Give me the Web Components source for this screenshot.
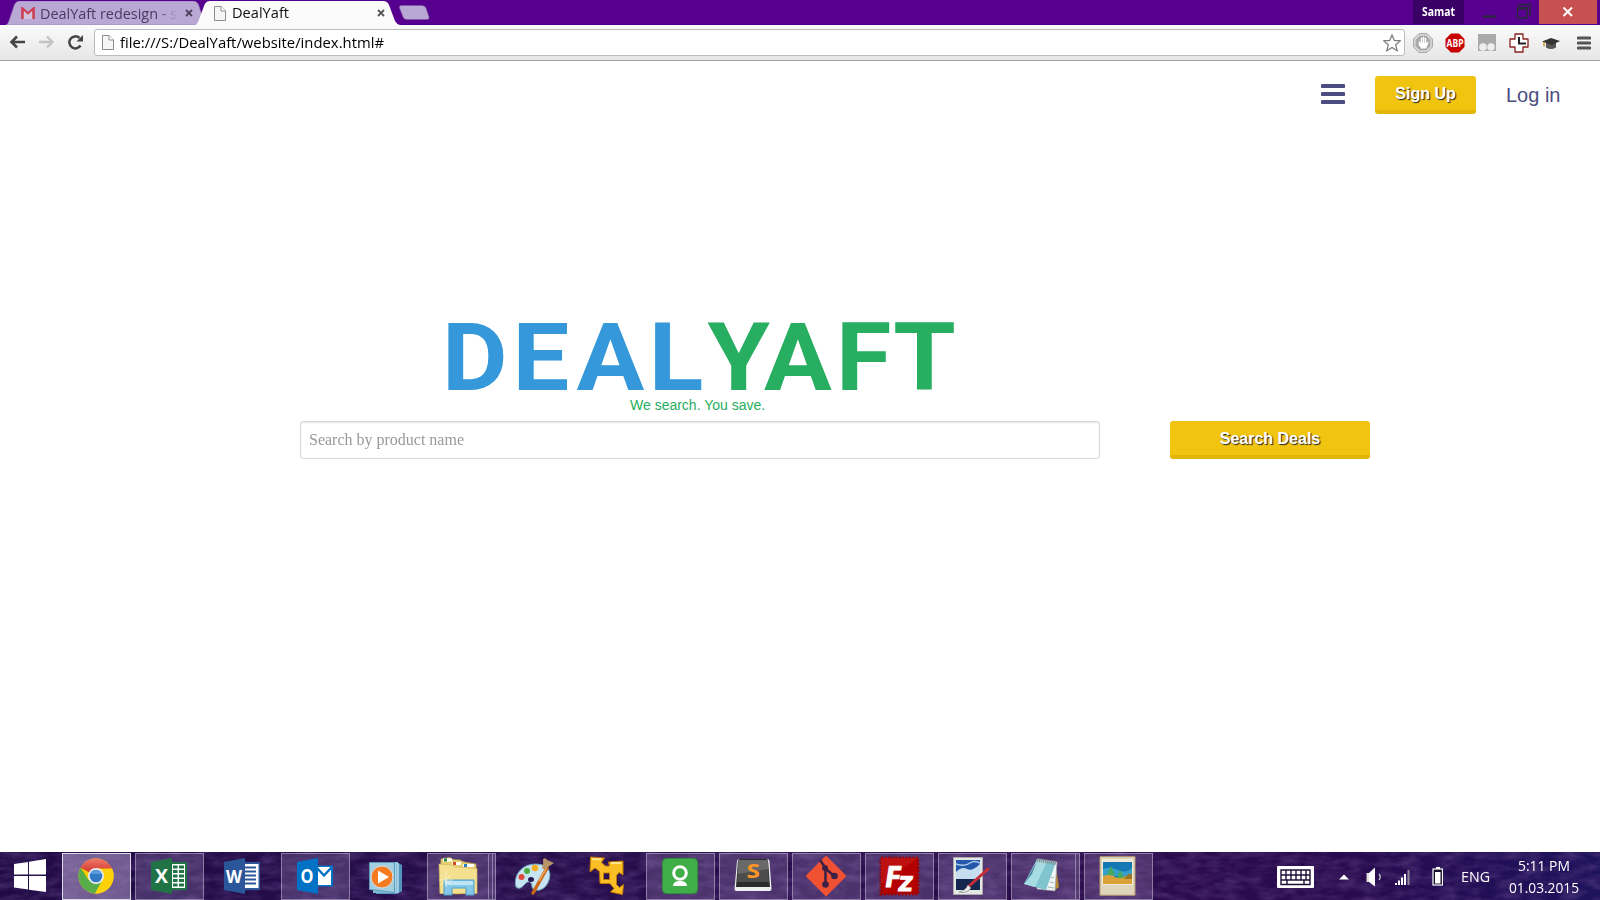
<!DOCTYPE html>
<html lang="en">
<head>
<meta charset="utf-8">
<title>DealYaft</title>
<style>
html,body{margin:0;height:100%;overflow:hidden;background:#fff}
body{font-family:"Liberation Sans",Arial,sans-serif}
</style>
</head>
<body>
<desktop-shell></desktop-shell>
<script>
const make = (name, css, html, after) => customElements.define(name, class extends HTMLElement {
  connectedCallback() {
    if (this.shadowRoot) return;
    this.attachShadow({mode:'open'}).innerHTML = `<style>${css}</style>${html}`;
    if (after) after(this, this.shadowRoot);
  }
});
const UI = 'font-family:"Open Sans","Noto Sans",sans-serif;';

/* Text squeezed or stretched to an exact width given by its w attribute */
make('fit-text', `:host{display:inline-block;white-space:pre;flex:none}span{display:inline-block;transform-origin:0 50%}`,
  `<span><slot></slot></span>`, (el, root) => {
    const w = +el.getAttribute('w'), s = root.querySelector('span');
    const n = s.getBoundingClientRect().width;
    el.style.width = w + 'px';
    if (n) s.style.transform = `scaleX(${w / n})`;
  });

const pageIcon = `<svg width="12" height="15" viewBox="0 0 12 15"><path d="M.5.5H7l4.500 4.500v9.500H.5z" fill="#f6f6f6" stroke="#8d8d8d"/><path d="M7 .5V5h4.500" fill="#fff" stroke="#8d8d8d"/></svg>`;
const closeX = c => `<svg width="8" height="8" viewBox="0 0 8 8"><path d="M1 1l6 6M7 1L1 7" stroke="${c}" stroke-width="1.8"/></svg>`;

make('tab-strip', `:host{display:flex;height:25px;background:#570090;${UI}font-size:15px;line-height:23px;color:#111;overflow:hidden}
.tab{position:relative;height:24px;margin-top:1px;display:flex;align-items:center;box-sizing:border-box}
.tab>.bg{position:absolute;left:0;top:0}.tab>*:not(.bg){position:relative}
.tab fit-text{margin-top:-1px}
.t1{width:199px;margin-left:6px;padding-left:15px;color:#4a3a63}.t2{width:207px;margin-left:-10px;padding-left:19px}
.clip{width:138px;margin-left:5px;overflow:hidden;height:23px;-webkit-mask:linear-gradient(90deg,#000 85%,transparent)}
.clip fit-text{margin-top:-1px}
.new{margin:5px 0 0 -4px;width:32px;height:16px}
.who{margin-left:auto;width:51px;height:24px;margin-right:1px;background:#3b0066;color:#fff;font-size:11.500px;font-weight:700;text-align:center}
.win{width:74px;display:flex;height:24px}.win svg{display:block}
.close{width:58px;height:24px;background:#c75050;margin-right:3px;display:flex;align-items:center;justify-content:center}
`, `<div class="tab t1"><svg class="bg" width="199" height="24"><path d="M0 24Q2 23 3 20L8 5Q9.500 0 14 0H187Q191.500 0 193 5L199 24z" fill="#b9a8d3" stroke="#8d73ae" stroke-width=".6"/></svg>
<svg width="14" height="12" viewBox="0 0 14 12"><path d="M1.400 12V1.500L7 6.700l5.600-5.200V12" fill="none" stroke="#cf3f50" stroke-width="2.500"/><path d="M3 4l4 3.800L11 4v8H3z" fill="#d3c4dd"/></svg>
<div class="clip"><fit-text w="137">DealYaft redesign - s</fit-text></div><span style="margin-left:7px;display:flex">${closeX('#51405e')}</span></div>
<div class="tab t2"><svg class="bg" width="207" height="24"><path d="M0 24Q2.500 23 3.500 20L9 5Q10.500 0 15 0H188Q192.500 0 194 4L200 20Q201.500 23 205 24z" fill="#fbfbfb"/></svg>
<span style="display:flex">${pageIcon}</span><fit-text w="57" style="margin-left:6px">DealYaft</fit-text><span style="margin-left:88px;display:flex">${closeX('#555')}</span></div>
<svg class="new" viewBox="0 0 32 16"><path d="M3 .5H24Q27 .5 28 3L31 12Q31.500 14.500 29 14.500H9Q6 14.500 5 12L1.500 3Q1 .5 3 .5z" fill="#b9a8d3" stroke="#7d58a6" stroke-width=".6"/></svg>
<div class="who"><fit-text w="33">Samat</fit-text></div>
<div class="win"><svg width="74" height="24"><path d="M18 16.500H31.500" stroke="#2a2a35" stroke-width="2"/><path d="M54 5.500V4.500H65V15H64" fill="none" stroke="#2a2a35" stroke-width="1.400"/><path d="M52.500 8.500H62V18H52.500z" fill="none" stroke="#2a2a35" stroke-width="1.300"/><path d="M52 8H62.500" stroke="#2a2a35" stroke-width="2.500"/></svg></div>
<div class="close"><svg width="12" height="10" viewBox="0 0 12 10"><path d="M1.500 .5l8.500 8.500M10 .5L1.500 9" stroke="#fff" stroke-width="2"/></svg></div>`);

make('tool-bar', `:host{display:flex;align-items:center;height:36px;box-sizing:border-box;background:linear-gradient(#fbfbfb,#e6e6e6);border-bottom:1px solid #a3a3a3;padding-left:9px;${UI}font-size:15px;color:#000}
svg{display:block;flex:none}.nav{display:flex;gap:12px;width:85px}
.box{width:1311px;height:27px;box-sizing:border-box;border:1px solid #bbb;border-radius:3px;background:#fff;display:flex;align-items:center;padding:0 3px 0 7px;line-height:25px}
.box .star{margin-left:auto}.ext{display:flex;gap:12px;margin-left:8px;align-items:center}`,
`<div class="nav"><svg width="17" height="14" viewBox="0 0 17 14"><path d="M16 7H3M8 1.500L2.500 7L8 12.500" fill="none" stroke="#444" stroke-width="2.600"/></svg>
<svg width="17" height="14" viewBox="0 0 17 14"><path d="M1 7h13M9 1.500L14.500 7L9 12.500" fill="none" stroke="#c3c3c3" stroke-width="2.400"/></svg>
<svg width="17" height="16" viewBox="0 0 17 16" style="margin-top:-1px"><path d="M13.500 11.500A6 6 0 1 1 12.500 4" fill="none" stroke="#444" stroke-width="2.500"/><path d="M16 1v6.500H9.500z" fill="#444"/></svg></div>
<div class="box">${pageIcon}<fit-text w="264" style="margin-left:6px">file:///S:/DealYaft/website/index.html#</fit-text>
<svg class="star" width="18" height="18" viewBox="0 0 18 18"><path d="M9 1l2.300 5.400 6 .5-4.600 3.900 1.500 5.900L9 13.500l-5.200 3.200 1.500-5.900L.7 6.900l6-.5z" fill="#fff" stroke="#777" stroke-width="1.200"/></svg></div>
<div class="ext">
<svg width="20" height="20" viewBox="0 0 20 20"><path d="M6 .7h8L19.300 6v8L14 19.300H6L.7 14V6z" fill="#e4e4e4" stroke="#999"/><path d="M6.700 2.500h6.600L17.500 6.700v6.600L13.300 17.500H6.700L2.500 13.300V6.700z" fill="#aaa"/><path d="M6.500 9v3.500M8.500 5.500V11M10.500 4.500V11M12.500 5.500V11" stroke="#fff" stroke-width="1.500" stroke-linecap="round"/><path d="M6 10h7.300l1.700-1.500q1 .3.300 1.500L13 15.500H8z" fill="#fff"/></svg>
<svg width="20" height="20" viewBox="0 0 20 20"><path d="M6 .5h8L19.500 6v8L14 19.500H6L.5 14V6z" fill="#c90000"/><text x="1.500" y="13.700" font-family="Open Sans" font-weight="700" font-size="10" fill="#fff" textLength="17" lengthAdjust="spacingAndGlyphs">ABP</text></svg>
<svg width="20" height="20" viewBox="0 0 20 20"><path d="M1 1h18v17H1z" fill="#aaa"/><circle cx="6" cy="14" r="3.800" fill="#eee"/><circle cx="14" cy="14" r="3.800" fill="#eee"/></svg>
<svg width="20" height="20" viewBox="0 0 20 20"><path d="M6 1h8v5h5v8h-5v5H6v-5H1V6h5z" fill="#fff" stroke="#8c2020" stroke-width="1.300" stroke-linejoin="round"/><path d="M10 4v6.500h7" fill="none" stroke="#222" stroke-width="2"/></svg>
<svg width="20" height="20" viewBox="0 0 20 20"><path d="M5 9v5.500q5 3 10 0V9z" fill="#555"/><path d="M1 8.500l9-3.500 9 3-8 4z" fill="#333"/><path d="M3 9v4.500" stroke="#c79a3e" stroke-width="1.500"/></svg>
<svg width="14" height="14" viewBox="0 0 14 14" style="margin-left:4px"><path d="M1.300 2h11.400M1.300 7h11.400M1.300 12h11.400" stroke="#555" stroke-width="3" stroke-linecap="round"/></svg>
</div>`);

make('yellow-button', `:host{display:block;box-sizing:border-box;height:38px;border-bottom:4px solid #e2b607;border-radius:3px;background:#f1c40f;font-weight:700;font-size:16px;line-height:36px;color:#fff;text-align:center;text-shadow:1px 1px 1px #222}`, `<slot></slot>`);

make('site-nav', `:host{display:flex;justify-content:flex-end;align-items:flex-start;height:70px;box-sizing:border-box;padding:15px 40px 0 0;color:#4b4d80}
svg{margin:8px 30px 0 0}yellow-button{width:101px;margin-right:30px}a{font-size:20px;line-height:39px;width:54px;white-space:nowrap}`,
`<svg width="24" height="20"><path d="M1.500 2h21M1.500 10h21M1.500 18h21" stroke="#4b4d80" stroke-width="4" stroke-linecap="round"/></svg><yellow-button>Sign Up</yellow-button><a>Log in</a>`);

make('brand-mark', `:host{display:flex;flex-direction:column;color:#27ae60}
svg{display:block;margin-left:440px;overflow:visible}.tag{font-size:14px;line-height:20px;margin-left:630px;height:20px}`,
`<svg width="530" height="81"><text transform="scale(1.06 1)" x="1.900 68.500 128.900 197 252.400 305.600 373.600 427.500" y="76" font-family="Roboto" font-weight="700" font-size="95.200" fill="#3498db">DEAL<tspan fill="#27ae60">YAFT</tspan></text></svg><div class="tag">We search. You save.</div>`);

make('deal-search', `:host{display:flex;padding-left:300px}
.in{width:800px;height:38px;box-sizing:border-box;border:1px solid #d9d9d6;border-radius:3px;box-shadow:inset 0 1px 2px #e4e4e4;padding-left:8px;font:16px/36px "Liberation Serif",serif;color:#999}
yellow-button{width:200px;margin-left:70px}`,
`<div class="in"><fit-text w="155">Search by product name</fit-text></div><yellow-button>Search Deals</yellow-button>`);

make('site-page', `:host{display:block;height:791px;background:#fff}brand-mark{margin-top:183px}deal-search{margin-top:6px}`,
`<site-nav></site-nav><brand-mark></brand-mark><deal-search></deal-search>`);

make('task-button', `:host{display:flex;position:relative;box-sizing:border-box;width:69px;height:47px;align-items:flex-start;padding-top:2px;justify-content:center;border:1px solid transparent;flex:none}
:host([open]){background:rgba(170,150,200,.27);border-color:rgba(205,195,220,.5)}
:host([active]){background:linear-gradient(120deg,rgba(190,170,215,.55),rgba(150,130,180,.65));border-color:#ddd8e6}
:host([stack="2"]){width:62px;margin-right:7px}:host([stack="1"]){width:65px;margin-right:4px}
slot{display:block;margin-left:-1px}
i{display:none;position:absolute;top:-1px;bottom:-1px;box-sizing:border-box;border:1px solid rgba(205,195,220,.5);border-left:0;background:rgba(170,150,200,.3)}
:host([stack]) .a{display:block;right:-5px;width:4px}:host([stack="2"]) .b{display:block;right:-8px;width:3px}`,
`<slot></slot><i class="a"></i><i class="b"></i>`);

const G = {
chrome:`<defs><linearGradient id="r" x2="0" y2="1"><stop stop-color="#f07a6c"/><stop offset="1" stop-color="#c9261b"/></linearGradient></defs><circle cx="20" cy="20" r="17.500" fill="#fc0"/><path d="M20 20L4.500 11.800A17.500 17.500 0 0 1 36 13H20z" fill="url(#r)"/><path d="M4.700 11.500A17.500 17.500 0 0 0 19 37.500L27 24 20 20 12.500 24z" fill="#58ad4b"/><path d="M20 12.500H36A17.500 17.500 0 0 1 19 37.500L27 23z" fill="#fdd20a"/><circle cx="20" cy="20" r="8" fill="#e9eef2"/><circle cx="20" cy="20" r="6.300" fill="#3279c4"/><path d="M14.500 18a5.800 5.800 0 0 1 11 0z" fill="#5c9cdc"/>`,
excel:`<path d="M22 6h16v28H22z" fill="#1f7345"/><path d="M23 8h13v24H23z" fill="#fff"/><path d="M24 9.500h4.500v3H24zm6 0h5v3h-5zM24 14h4.500v3H24zm6 0h5v3h-5zM24 18.500h4.500v3H24zm6 0h5v3h-5zM24 23h4.500v3H24zm6 0h5v3h-5zM24 27.500h4.500v3H24zm6 0h5v3h-5z" fill="#1f7345"/><path d="M2 6l21-4v36L2 34z" fill="#1f7345"/><text x="6" y="27" font-family="Open Sans" font-weight="700" font-size="20" fill="#fff" textLength="13" lengthAdjust="spacingAndGlyphs">X</text>`,
word:`<path d="M22 6h16v28H22z" fill="#2b579a"/><path d="M23 8h13.500v24H23z" fill="#fff"/><path d="M22 11.500h12M22 15.500h12M22 19.500h12M22 23.500h12M22 27.500h12" stroke="#2b579a" stroke-width="1.800"/><path d="M2 6l21-4v36L2 34z" fill="#2b579a"/><text x="4" y="26.500" font-family="Open Sans" font-weight="700" font-size="18" fill="#fff" textLength="16" lengthAdjust="spacingAndGlyphs">W</text>`,
outlook:`<path d="M22 9.500h16v21H22z" fill="#0072c6"/><path d="M22 11h14v18H22z" fill="#fff"/><path d="M21 11l8 8.500L37 11" fill="none" stroke="#0072c6" stroke-width="2.500"/><path d="M2 6l21-4v36L2 34z" fill="#0072c6"/><text x="5.500" y="27" font-family="Open Sans" font-weight="700" font-size="19" fill="#fff" textLength="13" lengthAdjust="spacingAndGlyphs">O</text>`,
wmp:`<path d="M8 7h22l4 2v26l-5 3H8z" fill="#5296bd"/><path d="M5 6h25v31H5z" fill="#82bcd6"/><path d="M30 7v30M27 7v30" stroke="#d4eef8"/><path d="M1.500 6.500h25v30l-25-3z" fill="#a3cee0" stroke="#5c9ab9"/><circle cx="14" cy="21" r="11" fill="#f47b20" stroke="#d5dfe5"/><path d="M10 14.500v13L21 21z" fill="#fff"/>`,
folder:`<path d="M3 3l9-1.500 3 2 7 .5 4 2 12 2 .5 28-18 2L2 37z" fill="#e8cf74" stroke="#b99d4d" stroke-width=".7"/><path d="M5 4h9M14 7.500h9M25 9.500h11" stroke="#fff" stroke-width="3"/><path d="M6 4h3" stroke="#278447" stroke-width="3"/><path d="M15 7.500h3" stroke="#d44426" stroke-width="3"/><path d="M26 9.500h3" stroke="#257fc5" stroke-width="3"/><path d="M1 8l13 1 3 2 10 .5 12 1V37.500H2z" fill="#f4e08f" stroke="#d4b65f" stroke-width=".7"/><path d="M6 24h30v15h-8v-7H14v7H6z" fill="#85c7e6" stroke="#4a9fc9"/><path d="M7 25h28v4H7z" fill="#bbe4f4"/><path d="M8 15v16M1 24h14M3 19l10 10M13 19L3 29" stroke="#fffbe0" stroke-width=".8" opacity=".8"/>`,
paint:`<path d="M2 31C-1 20 7 8 22 8c12 0 16 8 13 16-3 11-15 13-17 7 0-5-3-7-7-3-3 3-5 6-9 3z" fill="#c7e4f2" stroke="#6a9fba"/><ellipse cx="17" cy="23.500" rx="3" ry="2.500" fill="#251650"/><circle cx="7.500" cy="21" r="3" fill="#dd4a3b"/><circle cx="13" cy="15" r="3" fill="#4aad3c"/><circle cx="21" cy="12" r="3.300" fill="#f7ae22"/><path d="M33 12L19 37" stroke="#cb6818" stroke-width="3.500" stroke-linecap="round"/><path d="M32.500 12L25 25" stroke="#f3a85a" stroke-width="1.500"/><path d="M29 3q3-2 4 1l7 3-6 4-3 3-3-2q2-5 1-9z" fill="#b99467"/>`,
arrows:`<path d="M3.500 1l14 1-3 4.500 4 3.500h4l-1-4 14.500-1v14l-4-2.500-2.500 3v9l3 3 4-3-1 10-12-2.500 3.500-3.500-4-5h-10l-.5-12-4.500-3.500-5 4z" fill="#fbbf25" stroke="#bd760b" stroke-linejoin="round"/><path d="M16.500 17h6v6.500h-6z" fill="#291350" stroke="#bd760b"/><path d="M5 3l9 .5M24 7h10" stroke="#ffe68d" stroke-width="2"/>`,
green:`<rect x="2.500" y="2.500" width="35" height="35" rx="4" fill="#3fae49" stroke="#308d38"/><circle cx="20" cy="17" r="6.300" fill="none" stroke="#fff" stroke-width="3"/><path d="M13 30q0-5 7-5t7 5z" fill="#fff"/>`,
sublime:`<path d="M4 5q.5-2 2-2h28q2 0 2.500 2L38.500 33q0 2-2 2h-33q-2 0-2-2z" fill="#eee"/><path d="M5 4q1-1 2-1h26q1.500 0 2 1l2 27H3z" fill="#2b2b2b"/><path d="M5.500 4h29l1.500 22H4z" fill="#4c4c4c"/><path d="M5.500 4h29.200l.6 9L4.600 18z" fill="#696969"/><text x="13.500" y="21.500" font-family="Open Sans" font-weight="700" font-size="19" fill="#ff9526" textLength="13.500" lengthAdjust="spacingAndGlyphs">S</text>`,
git:`<path d="M20 1.500L38.500 20 20 38.500 1.500 20z" fill="#f05133" stroke="#f05133" stroke-width="3" stroke-linejoin="round"/><path d="M14 4l5.500 8v17M19 12l9 8" fill="none" stroke="#3b2145" stroke-width="2.500"/><circle cx="19" cy="12" r="3" fill="#3b2145"/><circle cx="19.500" cy="28.500" r="3.300" fill="#3b2145"/><circle cx="28.500" cy="20" r="3.300" fill="#3b2145"/>`,
fz:`<rect x="2" y="2" width="37" height="36" fill="#b40000" stroke="#a00000" stroke-width="3" stroke-dasharray="2 1.500"/><path d="M2 2h37L2 28z" fill="#c51a1a" opacity=".6"/><text transform="skewX(-9)" x="9.500" y="31" font-family="Open Sans" font-weight="700" font-size="29" fill="#fff" stroke="#fff">F</text><text transform="skewX(-9)" x="24" y="35" font-family="Open Sans" font-weight="700" font-size="27" fill="#fff" stroke="#fff" textLength="14" lengthAdjust="spacingAndGlyphs">z</text>`,
pic:`<path d="M1.500 1.500h29v37h-29z" fill="#e6e6e4" stroke="#aaa"/><path d="M4 4h24v30H4z" fill="#2458a8"/><path d="M4 16q6-6 11-3t13-5v15H4z" fill="#c7def0"/><path d="M4 8q9 3 14-1 4-3 10 0" stroke="#a9c9ea" fill="none" stroke-width="1.500"/><path d="M4 23h24v11H4z" fill="#14284f"/><path d="M36 13L16 31" stroke="#c72d35" stroke-width="3" stroke-linecap="round"/><path d="M16 29l3 3q-4 6-12 4 6-1 9-7z" fill="#e8e8e8" stroke="#777" stroke-width=".6"/>`,
notepad:`<path d="M32 5l4 26-5 4z" fill="#b58b34"/><path d="M14 3l20 3-2 29L14 33z" fill="#f1f5f5" stroke="#99a" stroke-width=".7"/><path d="M14 3L33 6 23 34 1 28z" fill="#7fc4cf"/><path d="M14 4L24 5.500 12 31 1 28z" fill="#a7dce2"/><path d="M14 5L9 18 1 28z" fill="#4e899f"/><path d="M25 31l6 1M27 26l4 1M28 21l3 1" stroke="#9bb"/><path d="M14 4l19 3" stroke="#888" stroke-width="4" stroke-dasharray="1 1"/>`,
photo:`<path d="M2 .7h35v38.500H2z" fill="#dfd5bd" stroke="#b49b6e"/><path d="M4 3h31v26H4z" fill="#f1ead8"/><path d="M5 6h29v22H5z" fill="#1478b4"/><path d="M5 13q7-3 15 1t14-2v8H5z" fill="#35a0c8"/><path d="M5 20q8-3 14 2 8-2 15-3v9H5z" fill="#d8a238"/><path d="M13 10l4 9h-8zM22 14l4 8h-7z" fill="#47a85c"/><path d="M26 23q4-6 8-5v5z" fill="#9b7524"/>`
};
make('app-icon', `:host{display:block;width:40px;height:40px}svg{display:block;overflow:visible}`, ``, (el, root) => {
  root.innerHTML += `<svg width="40" height="40" viewBox="0 0 40 40">${G[el.getAttribute('name')]}</svg>`;
});

const apps = [['chrome','active'],['excel','open'],['word',''],['outlook','open'],['wmp',''],['folder','open stack="2"'],['paint',''],['arrows',''],['green','open'],['sublime','open'],['git','open'],['fz','open'],['pic','open'],['notepad','open stack="1"'],['photo','open']];

make('task-tray', `:host{display:flex;height:48px;margin-left:auto;color:#fff;${UI}font-size:14px;align-items:center}
svg{display:block;flex:none}.clock{font-size:15px;line-height:22px;text-align:center;width:72px;margin:-1px 20px 0 18px;display:flex;flex-direction:column;align-items:center}`,
`<svg width="38" height="22" viewBox="0 0 38 22" style="margin:2px 25px 0 0"><rect width="37" height="22" rx="1" fill="#fff"/><path d="M4 4h29v14.500H4zM4 9h29M4 14h29M9 4v10M14 4v10M19 4v10M24 4v10M29 4v10M10 14v4M27 14v4" fill="none" stroke="#1d1038" stroke-width="1.400"/></svg>
<svg width="10" height="6" style="margin:2px 17px 0 -1px"><path d="M0 5.500L5 .5l5 5z" fill="#fff"/></svg>
<svg width="18" height="20" style="margin:1px 11px 0 0"><path d="M.5 6h3v9h-3z" fill="#ddd"/><path d="M3 6L9 .5v19L3 15z" fill="#fff"/><path d="M13 7q2.500 3 0 6" fill="none" stroke="#ccc" stroke-width="1.300"/></svg>
<svg width="16" height="16" style="margin:2px 21px 0 0"><path d="M1 14v2M4 11.500V16M7 8.500V16M10 5v11" stroke="#fff" stroke-width="2"/><path d="M13.500 1v15" stroke="#91879c" stroke-width="2"/></svg>
<svg width="11" height="19" style="margin:1px 18px 0 0"><path d="M4 0h4v2H4z" fill="#fff"/><rect x="1" y="2" width="9.500" height="16" fill="#17102a" stroke="#fff" stroke-width="1.200"/><path d="M3 5h5.500v11.500H3z" fill="#fff"/></svg>
<fit-text w="29" style="margin-top:1px">ENG</fit-text>
<div class="clock"><fit-text w="52">5:11 PM</fit-text><fit-text w="70">01.03.2015</fit-text></div>`);

make('task-bar', `:host{display:flex;position:relative;height:48px;overflow:hidden;background:#260d50}
.tex{position:absolute;inset:0;width:100%;height:100%}
.row{position:relative;display:flex;width:100%}.start{width:62px;padding:7px 0 0 14px;box-sizing:border-box}
.apps{display:flex;gap:4px;padding-top:1px}`,
`<svg class="tex" preserveAspectRatio="none"><defs><filter id="n" x="0" y="0" width="100%" height="100%" color-interpolation-filters="sRGB"><feTurbulence type="fractalNoise" baseFrequency=".05 .13" numOctaves="4" seed="8"/><feColorMatrix values="0 0 0 0 .36  0 0 0 0 .24  0 0 0 0 .5  1.5 0 0 0 -.5"/></filter><linearGradient id="g"><stop stop-color="#1f0a45"/><stop offset=".3" stop-color="#260e4b"/><stop offset=".75" stop-color="#2b0b4b"/><stop offset=".85" stop-color="#280b50"/><stop offset="1" stop-color="#1c125c"/></linearGradient></defs><rect width="1600" height="48" fill="url(#g)"/><rect width="1600" height="48" filter="url(#n)" opacity=".75"/></svg>
<div class="row"><div class="start"><svg width="33" height="34" viewBox="0 0 33 34"><path d="M0 5l14-2v12.500H0zM15 2.800L32 0v15.500H15zM0 17h14v13.500L0 28.500zM15 17h17v16L15 30.700z" fill="#fff"/></svg></div>
<div class="apps">${apps.map(([n,a]) => `<task-button ${a}><app-icon name="${n}"></app-icon></task-button>`).join('')}</div>
<task-tray></task-tray></div>`);

make('desktop-shell', `:host{display:flex;flex-direction:column;width:1600px;height:900px;overflow:hidden}`,
`<tab-strip></tab-strip><tool-bar></tool-bar><site-page></site-page><task-bar></task-bar>`);
</script>
</body>
</html>
